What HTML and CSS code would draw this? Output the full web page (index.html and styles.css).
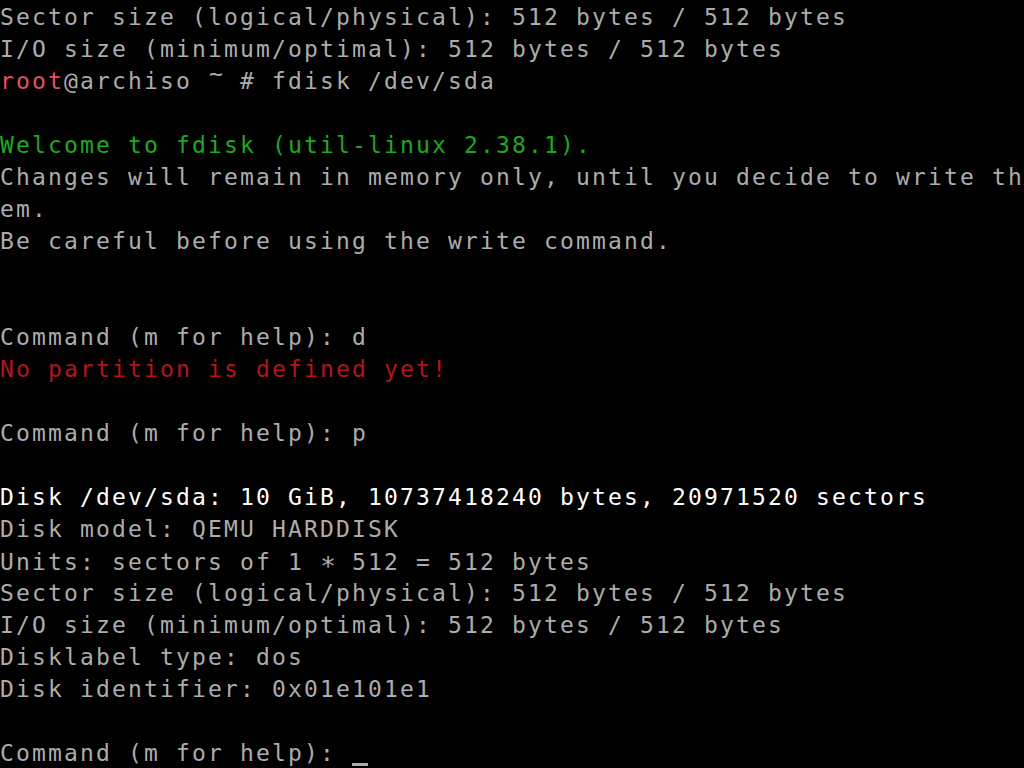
FILE: index.html
```html
<!DOCTYPE html>
<html>
<head>
<meta charset="utf-8">
<link rel="stylesheet" href="styles.css">
</head>
<body>
<div class="term">
<div class="line">Sector size (logical/physical): 512 bytes / 512 bytes</div>
<div class="line">I/O size (minimum/optimal): 512 bytes / 512 bytes</div>
<div class="line"><span class="root">root</span>@archiso <span class="tilde">~</span> # fdisk /dev/sda</div>
<div class="line"> </div>
<div class="line green">Welcome to fdisk (util-linux 2.38.1).</div>
<div class="line">Changes will remain in memory only, until you decide to write th</div>
<div class="line">em.</div>
<div class="line">Be careful before using the write command.</div>
<div class="line"> </div>
<div class="line"> </div>
<div class="line">Command (m for help): d</div>
<div class="line red">No partition is defined yet!</div>
<div class="line"> </div>
<div class="line">Command (m for help): p</div>
<div class="line"> </div>
<div class="line bright">Disk /dev/sda: 10 GiB, 10737418240 bytes, 20971520 sectors</div>
<div class="line">Disk model: QEMU HARDDISK</div>
<div class="line">Units: sectors of 1 <span class="star">∗</span> 512 = 512 bytes</div>
<div class="line">Sector size (logical/physical): 512 bytes / 512 bytes</div>
<div class="line">I/O size (minimum/optimal): 512 bytes / 512 bytes</div>
<div class="line">Disklabel type: dos</div>
<div class="line">Disk identifier: 0x01e101e1</div>
<div class="line"> </div>
<div class="line">Command (m for help): <span class="cursor"> </span></div>
</div>
</body>
</html>
```

FILE: styles.css
```css
html, body {
  margin: 0;
  padding: 0;
  background: #000;
  width: 1024px;
  height: 768px;
  overflow: hidden;
}
.term {
  padding-top: 1px;
  font-family: "DejaVu Sans Mono", monospace;
  font-size: 23px;
  letter-spacing: 2.153px;
  color: #acacac;
  height: 767px;
  overflow: hidden;
}
.line {
  height: 32px;
  line-height: 32px;
  white-space: pre;
}
.root { color: #e2505e; }
.green { color: #1ea81e; }
.red { color: #b4141c; }
.bright { color: #ffffff; }
.tilde, .star {
  display: inline-block;
  width: 16px;
  letter-spacing: 0;
  text-align: center;
}
.tilde {
  line-height: 18px;
  vertical-align: 7px;
}
.star {
  font-size: 26px;
}
.cursor {
  display: inline-block;
  width: 16px;
  height: 32px;
  vertical-align: top;
  position: relative;
}
.cursor::after {
  content: "";
  position: absolute;
  left: 0;
  top: 26px;
  width: 16px;
  height: 3px;
  background: #acacac;
}
```
